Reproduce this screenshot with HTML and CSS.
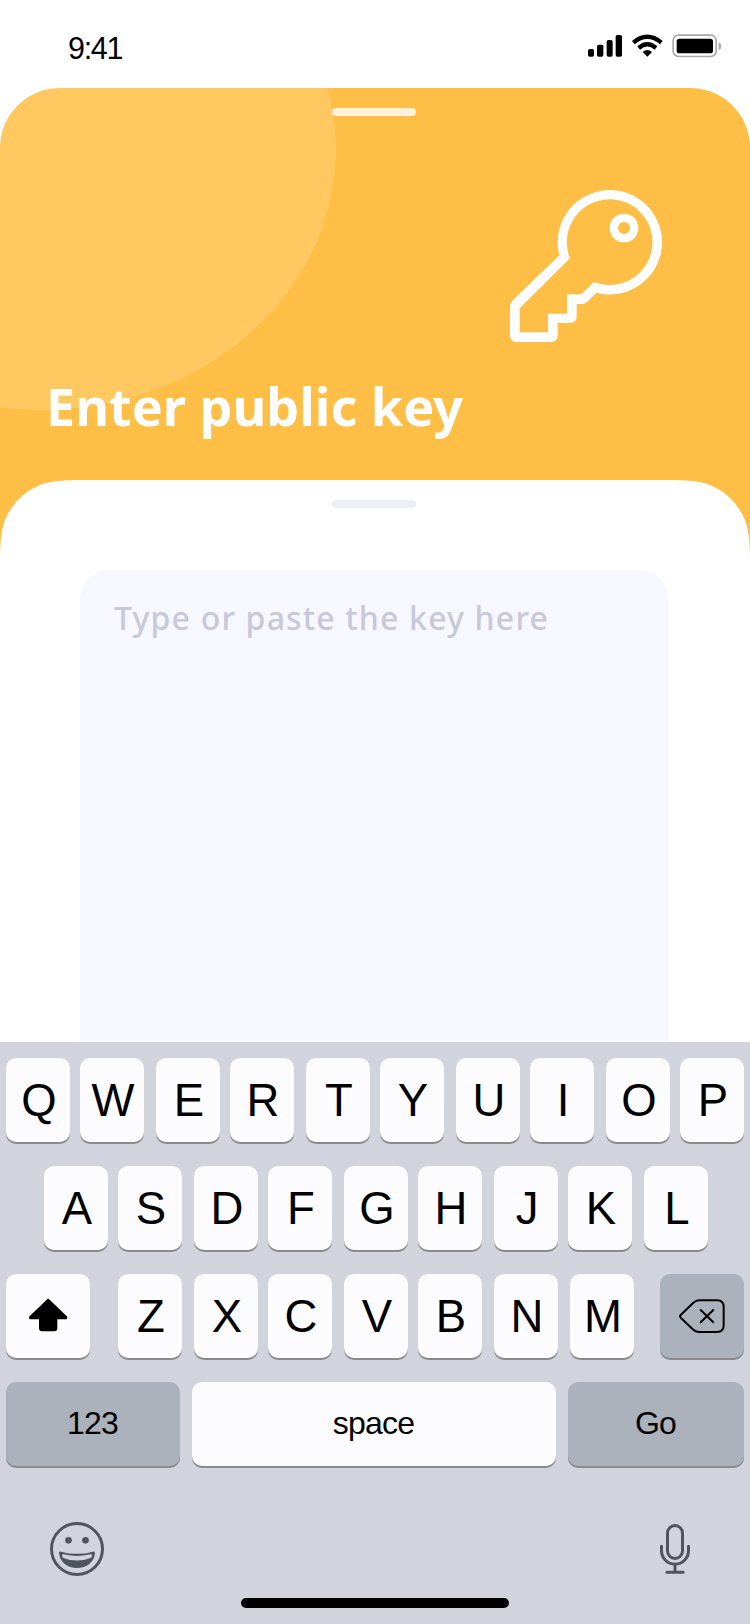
FILE: index.html
```html
<!DOCTYPE html>
<html lang="en">
<head>
<meta charset="utf-8">
<title>Enter public key</title>
<link rel="stylesheet" href="styles.css">
</head>
<body>
<div class="screen">
  <header class="status">
    <span class="time">9:41</span>
    <svg class="status-icons" viewBox="84 42 402 72">
      <rect x="84" y="87" width="18" height="23" rx="5"/>
      <rect x="111" y="74" width="19" height="36" rx="5"/>
      <rect x="140" y="60" width="18" height="50" rx="5"/>
      <rect x="167" y="45" width="19" height="65" rx="5"/>
      <path d="M262 110 L248 96 Q262 84 276 96 Z"/>
      <path d="M236 84 Q262 62 288 84" fill="none" stroke="#000" stroke-width="13"/>
      <path d="M220 68 Q262 33 304 68" fill="none" stroke="#000" stroke-width="13"/>
      <rect x="339.500" y="45.500" width="129" height="64" rx="16" fill="none" stroke="#a9a9a9" stroke-width="5"/>
      <rect x="350" y="56" width="109" height="44" rx="8"/>
      <path d="M476 67 Q484 70 484 78.500 Q484 87 476 90 Z" fill="#a9a9a9"/>
    </svg>
  </header>
  <main class="card">
    <div class="hero">
      <div class="handle handle-light"></div>
      <svg class="key-icon" viewBox="60 60 456 456">
        <path fill="#fff" fill-rule="evenodd" d="M60 409 Q60 399 67 392 L208 256 A156.500 156.500 0 1 1 319 368 L292 395 Q285 402 275 402 H260 V439 Q260 459 240 459 H203 V496 Q203 516 183 516 H80 Q60 516 60 496 Z M89 415 L240 265 A128.500 128.500 0 1 1 312 336 L274 373 H231 V431 H174 V487 H89 Z"/>
        <circle cx="402" cy="174" r="30.500" fill="none" stroke="#fff" stroke-width="25"/>
      </svg>
      <h1 class="title">Enter public key</h1>
    </div>
    <section class="sheet">
      <div class="handle handle-grey"></div>
      <div class="field">Type or paste the key here</div>
    </section>
  </main>
  <section class="keyboard">
    <div class="row">
      <div class="key">Q</div><div class="key">W</div><div class="key">E</div><div class="key">R</div><div class="key">T</div><div class="key">Y</div><div class="key">U</div><div class="key">I</div><div class="key">O</div><div class="key">P</div>
    </div>
    <div class="row row-inset">
      <div class="key">A</div><div class="key">S</div><div class="key">D</div><div class="key">F</div><div class="key">G</div><div class="key">H</div><div class="key">J</div><div class="key">K</div><div class="key">L</div>
    </div>
    <div class="row row-shift">
      <div class="key square">
        <svg class="key-svg" viewBox="18 72 252 252"><path d="M144.500 148 L199 200 Q202 205.500 196 206 H170 V235 Q170 242 163 242 H126 Q119 242 119 235 V206 H93 Q87 205.500 90 200 Z" stroke="#000" stroke-width="4" stroke-linejoin="round"/></svg>
      </div>
      <div class="key">Z</div><div class="key">X</div><div class="key">C</div><div class="key">V</div><div class="key">B</div><div class="key">N</div><div class="key">M</div>
      <div class="key square dark">
        <svg class="key-svg" viewBox="855 72 252 252"><g fill="none" stroke="#000" stroke-width="6" stroke-linecap="round" stroke-linejoin="round"><path d="M917 195 L955 158 Q963 151 973 151 H1026 Q1046 151 1046 171 V226 Q1046 246 1026 246 H973 Q963 246 955 239 L917 203 Q913 199 917 195 Z"/><path d="M977 180 L1015 217 M1015 180 L977 217"/></g></svg>
      </div>
    </div>
    <div class="row row-words">
      <div class="key word dark num">123</div>
      <div class="key word space">space</div>
      <div class="key word dark go">Go</div>
    </div>
    <div class="tools">
      <svg class="emoji" viewBox="60 66 162 162">
        <circle cx="141" cy="147" r="76.500" fill="none" stroke="#50555d" stroke-width="9"/>
        <circle cx="115.500" cy="121" r="10" fill="#50555d"/>
        <circle cx="166.500" cy="121" r="10" fill="#50555d"/>
        <path fill="#50555d" fill-rule="evenodd" d="M87 159 Q87 154 93 155 Q141 168 189 155 Q195 154 195 159 C193 187 169 204 141 204 C113 204 89 187 87 159 Z M96 166 Q97 162 101 163 Q141 173 181 163 Q185 162 186 166 Q186 170 182 174 Q141 189 100 174 Q96 170 96 166 Z"/>
      </svg>
      <svg class="mic" viewBox="480 72 90 150">
        <g fill="none" stroke="#50555d" stroke-width="9" stroke-linecap="round"><rect x="502.500" y="76.500" width="45" height="99" rx="22.500"/><path d="M484.500 139 V152 A40.500 40.500 0 0 0 565.500 152 V139 M525 193 V216 M500.500 217 H549.500"/></g>
      </svg>
    </div>
    <div class="home"></div>
  </section>
</div>
</body>
</html>
```

FILE: styles.css
```css
* { box-sizing: border-box; }
body { margin: 0; background: #fff; }
svg { display: block; }

.screen {
  width: 750px;
  height: 1624px;
  display: flex;
  flex-direction: column;
  overflow: hidden;
  font-family: "Liberation Sans", Arial, sans-serif;
  color: #000;
}

.status {
  height: 88px;
  display: flex;
  justify-content: space-between;
  padding: 31px 28px 0 68px;
}
.time { font-size: 30.5px; line-height: 34px; letter-spacing: -1.3px; }
.status-icons { width: 134px; height: 24px; margin-top: 3px; }

.card {
  height: 954px;
  display: flex;
  flex-direction: column;
  border-radius: 60px 60px 0 0;
  overflow: hidden;
  background: radial-gradient(ellipse 295px 260px at 41px 62px, #ffc861 99.8%, #ffbe46 100%);
}
.hero { height: 392px; display: flex; flex-direction: column; padding-top: 20px; }
.handle { flex: none; width: 84px; height: 8px; border-radius: 4px; margin-left: 332px; }
.handle-light { background: #fff0d9; }
.handle-grey { background: #edeef3; }
.key-icon { flex: none; width: 152px; height: 152px; margin: 74px 0 0 510px; }
.title {
  margin: 29px 0 0 46px;
  font: 700 52px/70px "Noto Sans", sans-serif;
  letter-spacing: 0.05px;
  color: #fff;
  white-space: nowrap;
}
.sheet {
  flex: 1;
  display: flex;
  flex-direction: column;
  padding-top: 20px;
  background: #fff;
  clip-path: path("M0 80 C0 66 .8 50.5 5 40 A65 65 0 0 1 40 5 C50.500 .8 66 0 80 0 H670 C684 0 699.500 .8 710 5 A65 65 0 0 1 745 40 C749.200 50.500 750 66 750 80 V562 H0 Z");
}
.field {
  flex: 1;
  width: 588px;
  margin: 62px 0 0 80px;
  padding: 26px 34px 0;
  border-radius: 29px 29px 0 0;
  background: #f7f7ff;
  font: 500 32px/44px "Noto Sans", sans-serif;
  letter-spacing: 1.18px;
  color: #c8c8d8;
  white-space: nowrap;
}

.keyboard { height: 582px; padding-top: 16px; background: #d1d4dc; }
.row { display: flex; height: 84px; padding-left: 6px; margin-bottom: 24px; }
.row-inset { padding-left: 44px; }
.key {
  flex: none;
  width: 64px;
  height: 84px;
  border-radius: 10px;
  background: #fcfcfe;
  box-shadow: 0 2px 0 #898a8d;
  font-size: 45.5px;
  line-height: 86px;
  text-align: center;
  padding-left: 2px;
}
.key + .key { margin-left: 12px; }
.key:nth-child(even) { margin-left: 10px; }
.row-shift .key:nth-child(2) { margin-left: 28px; }
.row-shift .key:nth-child(3), .row-shift .key:nth-child(5), .row-shift .key:nth-child(7), .row-shift .key:nth-child(8) { margin-left: 12px; }
.row-shift .key:nth-child(9) { margin-left: 26px; }
.row-shift .square { padding: 0; width: 84px; }
.dark { background: #abb2bc; }
.key-svg { width: 84px; height: 84px; }
.row-words .key { margin-left: 0; }
.row-words .key + .key { margin-left: 12px; }
.row-words .word { font-size: 32px; line-height: 82px; letter-spacing: -0.8px; padding: 0 1px 0 0; }
.num { width: 174px; }
.row-words .space { width: 364px; }
.row-words .go { width: 176px; }
.row-words .num { width: 174px; }

.tools {
  display: flex;
  justify-content: space-between;
  height: 108px;
  padding: 32px 60px 0 50px;
}
.emoji { width: 54px; height: 54px; }
.mic { width: 30px; height: 50px; margin-top: 2px; }
.home { width: 268px; height: 10px; margin: 0 0 0 241px; border-radius: 5px; background: #000; }
```
